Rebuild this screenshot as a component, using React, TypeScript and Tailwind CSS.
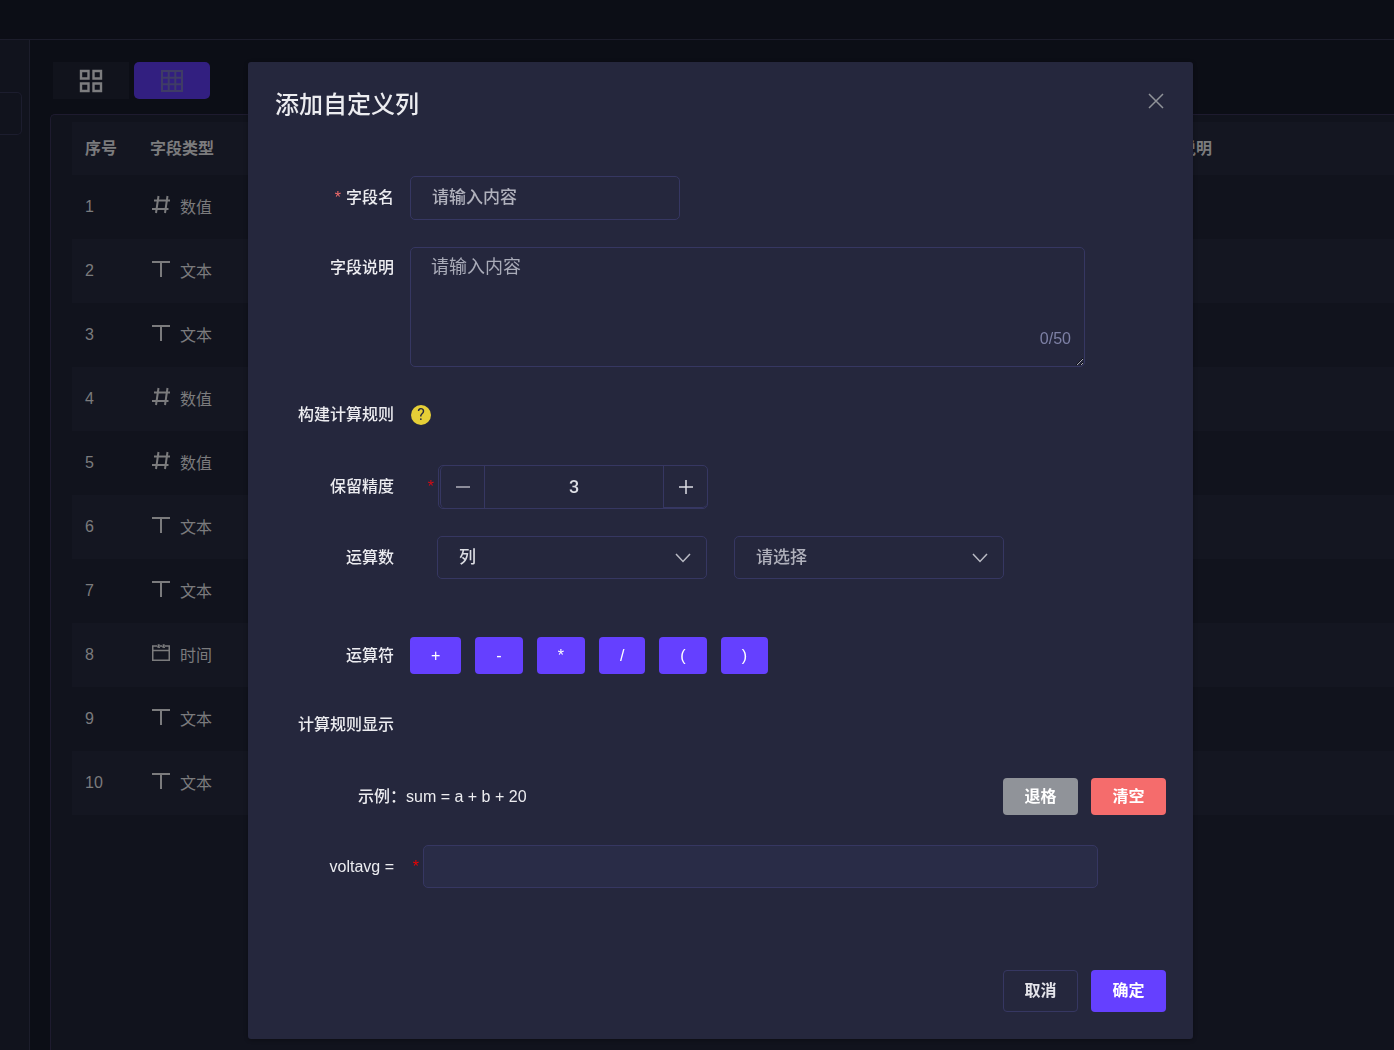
import React, { useState } from "react";
import clsx from "clsx";

type FieldKind = "number" | "text" | "time";

const kindLabels: Record<FieldKind, string> = {
  number: "数值",
  text: "文本",
  time: "时间",
};

const rows: FieldKind[] = [
  "number",
  "text",
  "text",
  "number",
  "number",
  "text",
  "text",
  "time",
  "text",
  "text",
];

const operators = ["+", "-", "*", "/", "(", ")"];

const fieldBox = "rounded-[5px] border border-[#363762] bg-transparent outline-none";

function KindIcon({ kind }: { kind: FieldKind }) {
  return (
    <svg width="20" height="20" viewBox="0 0 20 20" fill="none" stroke="currentColor" strokeWidth="2">
      {kind === "number" && <path d="M7.5 1 5 18M16.5 1 14 18M3 5.5h16M1 14h16.5" />}
      {kind === "text" && <path d="M1 3h18M10 3v15" />}
      {kind === "time" && (
        <path
          strokeWidth="1.5"
          d="M6 3H1.75v14.25h16.5V3H14M9 3h2M1.75 7.5h16.5M6.5 4.5 8.5 1.5M8.5 5 7 1.5M11.5 4.5l2-3M13.5 5 12 1.5"
        />
      )}
    </svg>
  );
}

function Chevron() {
  return (
    <svg
      className="pointer-events-none absolute right-4 top-1/2 -translate-y-1/2 text-[#b9bac4]"
      width="16"
      height="10"
      viewBox="0 0 16 10"
      fill="none"
      stroke="currentColor"
      strokeWidth="1.5"
    >
      <path d="m1 1 7 7.5L15 1" />
    </svg>
  );
}

function Label({ htmlFor, required, children }: { htmlFor?: string; required?: boolean; children: React.ReactNode }) {
  return (
    <label
      htmlFor={htmlFor}
      className="w-[119px] shrink-0 whitespace-nowrap text-right text-base font-medium leading-6 text-[#ececf0]"
    >
      {required && <span className="mr-[5px] text-[#f56c6c]">*</span>}
      {children}
    </label>
  );
}

function FieldTable() {
  return (
    <table className="w-full table-fixed border-collapse text-left text-base text-[#7b7b7d]">
      <thead>
        <tr className="h-[53px] bg-[#141621] font-bold">
          <th className="w-[65px] pl-[13px]">序号</th>
          <th className="w-[500px] pl-[13px]">字段类型</th>
          <th className="w-[498px] pl-[13px]">字段名</th>
          <th className="pl-[13px]">字段说明</th>
        </tr>
      </thead>
      <tbody>
        {rows.map((kind, i) => (
          <tr key={i} className="h-16 even:bg-[#141621]">
            <td className="pl-[13px]">{i + 1}</td>
            <td className="pl-[13px]">
              <span className="flex items-center gap-[9px] pl-px">
                <span className="pb-1">
                  <KindIcon kind={kind} />
                </span>
                <span className="pt-[2px]">{kindLabels[kind]}</span>
              </span>
            </td>
            <td />
            <td />
          </tr>
        ))}
      </tbody>
    </table>
  );
}

function Page() {
  return (
    <div className="flex h-screen flex-col overflow-hidden bg-[#0c0e16]">
      <header className="h-10 shrink-0 border-b border-[#1c1d2b]" />
      <div className="flex min-h-0 flex-1">
        <aside className="w-[30px] shrink-0 border-r border-[#1c1d2b] bg-[#11131d] pt-[52px]">
          <div className="mr-[7px] h-[43px] rounded-r-[5px] border border-l-0 border-[#1c1d2e]" />
        </aside>
        <main className="flex min-w-0 flex-1 flex-col pl-5 pt-[22px]">
          <div className="flex gap-[5px] pl-[3px]">
            <button
              aria-label="卡片"
              className="flex h-[37px] w-[76px] items-center justify-center bg-[#11131c] text-[#7d7d7f]"
            >
              <svg width="24" height="24" viewBox="0 0 24 24" fill="none" stroke="currentColor" strokeWidth="2.4">
                <path d="M2 2h7.5v7.5H2zM14.5 2H22v7.5h-7.5zM2 14.5h7.5V22H2zM14.5 14.5H22V22h-7.5z" />
              </svg>
            </button>
            <button
              aria-label="表格"
              className="flex h-[37px] w-[76px] items-center justify-center rounded-[5px] bg-[#321f80] text-[#3f3c66]"
            >
              <svg width="24" height="24" viewBox="0 0 24 24" fill="none" stroke="currentColor" strokeWidth="2">
                <path d="M2 2h20v20H2zM8.7 2v20M15.3 2v20M2 8.7h20M2 15.3h20" />
              </svg>
            </button>
          </div>
          <section className="mt-[15px] flex-1 rounded-tl-[5px] border-l border-t border-[#1e1b2f] bg-[#11131d] pl-[21px] pt-[7px]">
            <FieldTable />
          </section>
        </main>
      </div>
    </div>
  );
}

function AddColumnDialog() {
  const [precision, setPrecision] = useState(3);
  const [note, setNote] = useState("");
  const [formula, setFormula] = useState("");

  return (
    <form
      role="dialog"
      aria-labelledby="dialog-title"
      onSubmit={(e) => e.preventDefault()}
      className="w-full max-w-[945px] rounded-[3px] bg-[#25273d] p-[27px] shadow-[0_1px_4px_rgba(0,0,0,0.3)]"
    >
      <div className="flex justify-between">
        <h2 id="dialog-title" className="text-2xl font-medium leading-8 text-[#ececf0]">
          添加自定义列
        </h2>
        <button type="button" aria-label="关闭" className="flex h-6 w-[21px] items-center justify-center text-[#909399]">
          <svg width="16" height="16" viewBox="0 0 16 16" fill="none" stroke="currentColor" strokeWidth="1.5">
            <path d="m1 1 14 14M15 1 1 15" />
          </svg>
        </button>
      </div>

      <div className="mt-[55px] flex items-center gap-4">
        <Label htmlFor="name" required>
          字段名
        </Label>
        <input
          id="name"
          placeholder="请输入内容"
          className={clsx(
            fieldBox,
            "h-11 w-[270px] px-[21px] text-[17px] font-medium text-[#ececf0] placeholder:text-[#b0b1bc]",
          )}
        />
      </div>

      <div className="mt-[27px] flex gap-4">
        <span className="flex shrink-0 pt-[9px]">
          <Label htmlFor="note">字段说明</Label>
        </span>
        <div className="relative w-full max-w-[675px]">
          <textarea
            id="note"
            maxLength={50}
            value={note}
            onChange={(e) => setNote(e.target.value)}
            placeholder="请输入内容"
            className={clsx(
              fieldBox,
              "block h-[120px] w-full px-5 py-[5px] text-lg text-[#ececf0] placeholder:text-[#a9abb8]",
            )}
          />
          <span className="absolute bottom-4 right-[14px] text-base leading-6 text-[#7d80a5]">{note.length}/50</span>
        </div>
      </div>

      <div className="mt-9 flex items-center gap-4">
        <Label>构建计算规则</Label>
        <button
          type="button"
          aria-label="帮助"
          className="ml-px flex size-5 items-center justify-center rounded-full bg-[#e6cf37] font-[Roboto,sans-serif] text-base leading-5 text-[#25273d]"
        >
          ?
        </button>
      </div>

      <div className="mt-[38px] flex items-center">
        <Label htmlFor="precision">保留精度</Label>
        <span className="w-11 pr-1 text-right text-base leading-6 text-[#d40b14]">*</span>
        <div className={clsx(fieldBox, "flex h-11 w-[270px] text-[#dcdde3]")}>
          <button
            type="button"
            aria-label="减少"
            onClick={() => setPrecision(precision - 1)}
            className="ml-px flex w-[45px] items-center justify-center rounded-l-[5px] border-x border-[#363762] text-[#b0b1bb]"
          >
            <svg width="14" height="14" viewBox="0 0 14 14" stroke="currentColor" strokeWidth="1.5">
              <path d="M0 7h14" />
            </svg>
          </button>
          <input
            id="precision"
            value={precision}
            onChange={(e) => setPrecision(Number(e.target.value) || 0)}
            className="min-w-0 flex-1 bg-transparent text-center font-[Roboto,sans-serif] text-lg font-medium outline-none"
          />
          <button
            type="button"
            aria-label="增加"
            onClick={() => setPrecision(precision + 1)}
            className="flex w-11 items-center justify-center rounded-br-[5px] border-b border-l border-[#363762]"
          >
            <svg width="14" height="14" viewBox="0 0 14 14" stroke="currentColor" strokeWidth="1.5">
              <path d="M0 7h14M7 0v14" />
            </svg>
          </button>
        </div>
      </div>

      <div className="mt-[27px] flex items-center">
        <Label htmlFor="operand">运算数</Label>
        <div className="ml-[43px] flex gap-[27px]">
          <div className="relative">
            <select
              id="operand"
              className={clsx(
                fieldBox,
                "h-[43px] w-[270px] appearance-none px-[21px] text-[17px] font-medium text-[#dcdde3]",
              )}
            >
              <option>列</option>
            </select>
            <Chevron />
          </div>
          <div className="relative">
            <select
              aria-label="请选择"
              className={clsx(
                fieldBox,
                "h-[43px] w-[270px] appearance-none px-[21px] text-[17px] font-medium text-[#b0b1bc]",
              )}
            >
              <option>请选择</option>
            </select>
            <Chevron />
          </div>
        </div>
      </div>

      <div className="mt-[58px] flex items-center gap-4">
        <Label>运算符</Label>
        <div className="flex gap-[14px]">
          {operators.map((op) => (
            <button
              key={op}
              type="button"
              onClick={() => setFormula(formula + op)}
              className="h-[37px] rounded bg-[#6540ff] px-[21px] text-base font-medium text-white"
            >
              {op}
            </button>
          ))}
        </div>
      </div>

      <div className="mt-[39px] flex">
        <Label>计算规则显示</Label>
      </div>

      <div className="mt-[41px] flex items-center justify-between pl-[83px] text-base">
        <p className="font-medium text-[#ececf0]">示例：sum = a + b + 20</p>
        <div className="flex gap-[13px] font-bold text-white">
          <button
            type="button"
            onClick={() => setFormula(formula.slice(0, -1))}
            className="h-[37px] w-[75px] rounded bg-[#909399]"
          >
            退格
          </button>
          <button type="button" onClick={() => setFormula("")} className="h-[37px] w-[75px] rounded bg-[#f56c6c]">
            清空
          </button>
        </div>
      </div>

      <div className="mt-[30px] flex items-center">
        <Label htmlFor="formula">voltavg =</Label>
        <span className="w-[29px] shrink-0 pr-1 text-right text-base leading-6 text-[#f00000]">*</span>
        <input
          id="formula"
          value={formula}
          readOnly
          className="h-[43px] w-full max-w-[675px] rounded-[5px] border border-[#363762] bg-[#292c47] px-5 text-lg text-[#ececf0] outline-none"
        />
      </div>

      <div className="mt-[82px] flex justify-end gap-[13px] text-base font-bold">
        <button type="button" className="h-[42px] w-[75px] rounded border border-[#363762] text-[#e4e4ea]">
          取消
        </button>
        <button type="submit" className="h-[42px] w-[75px] rounded bg-[#6540ff] text-white">
          确定
        </button>
      </div>
    </form>
  );
}

export default function App() {
  return (
    <div className="font-['Liberation_Sans','Noto_Sans_CJK_SC',sans-serif]">
      <Page />
      <div className="fixed inset-0 flex items-start justify-center overflow-y-auto pl-[47px] pt-[62px]">
        <AddColumnDialog />
      </div>
    </div>
  );
}
